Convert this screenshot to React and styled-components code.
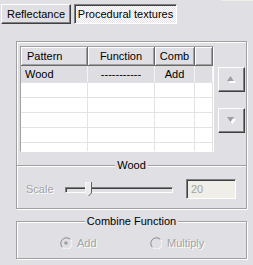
import React from "react";
import styled, { createGlobalStyle } from "styled-components";

const GlobalStyle = createGlobalStyle`
  html, body {
    margin: 0;
    padding: 0;
    background: #e0dfe3;
  }
  body {
    font-family: "Liberation Sans", Arial, sans-serif;
    font-size: 11px;
    color: #000;
  }
  * { box-sizing: border-box; }
`;

const Window = styled.div`
  width: 253px;
  height: 265px;
  display: flex;
  flex-direction: column;
  overflow: hidden;
  background: #e0dfe3;
`;

const TopStrip = styled.div`
  height: 4px;
  display: flex;
  justify-content: flex-end;
  span {
    width: 32px;
    height: 1px;
    background: #efeee8;
  }
`;

const TabRow = styled.div`
  display: flex;
  gap: 3px;
  padding-left: 1px;
  height: 20px;
`;

const TabButton = styled.div`
  height: 20px;
  width: ${(p) => p.$w}px;
  display: flex;
  align-items: center;
  justify-content: center;
  ${(p) =>
    p.$active
      ? `
    background: repeating-conic-gradient(#ffffff 0 25%, #e4e3e7 0 50%) 0 0 / 2px 2px;
    border-top: 1px solid #808080;
    border-left: 1px solid #808080;
    border-right: 1px solid #ffffff;
    border-bottom: 1px solid #ffffff;
    box-shadow: inset 1px 1px 0 #404040;
  `
      : `
    background: #e0dfe3;
    border-top: 1px solid #ffffff;
    border-left: 1px solid #ffffff;
    border-right: 1px solid #404040;
    border-bottom: 1px solid #404040;
    box-shadow: inset -1px -1px 0 #808080;
  `}
`;

const Box = styled.div`
  margin: 17px 0 0 16px;
  width: 231px;
  height: 168px;
  border: 1px solid #a0a0a0;
  box-shadow: inset 1px 1px 0 #fff, 1px 1px 0 #fff;
  display: flex;
  flex-direction: column;
`;

const ListRow = styled.div`
  display: flex;
  gap: 4px;
  padding: 4px 0 0 3px;
`;

const List = styled.div`
  width: 194px;
  height: 106px;
  background: #fff;
  border-top: 1px solid #a0a0a0;
  border-left: 1px solid #a0a0a0;
  border-right: 1px solid #fff;
  border-bottom: 1px solid #fff;
  overflow: hidden;
  display: flex;
  flex-direction: column;
`;

const HeaderRow = styled.div`
  display: flex;
  height: 19px;
  flex: none;
`;

const HeaderCell = styled.div`
  width: ${(p) => p.$w}px;
  flex: none;
  height: 19px;
  background: #e0dfe3;
  border-right: 1px solid #696969;
  border-bottom: 1px solid #696969;
  box-shadow: inset 1px 1px 0 #fff, inset -1px -1px 0 #a0a0a0;
  display: flex;
  align-items: center;
  justify-content: ${(p) => (p.$align === "left" ? "flex-start" : "center")};
  padding-left: ${(p) => (p.$align === "left" ? "6px" : "0")};
`;

const BodyRow = styled.div`
  display: flex;
  flex: none;
  height: ${(p) => p.$h}px;
  background: ${(p) => (p.$selected ? "#dedde2" : "#fff")};
  border-bottom: 1px solid #e3e3e3;
`;

const Cell = styled.div`
  width: ${(p) => p.$w}px;
  flex: none;
  display: flex;
  align-items: center;
  justify-content: ${(p) => (p.$align === "left" ? "flex-start" : "center")};
  padding-left: ${(p) => (p.$align === "left" ? "4px" : "0")};
  border-right: 1px solid ${(p) => (p.$selected ? "#f4f4f4" : "#e3e3e3")};
  white-space: nowrap;
  overflow: hidden;
`;

const SideButtons = styled.div`
  display: flex;
  flex-direction: column;
  gap: 16px;
  padding-top: 21px;
`;

const ArrowButton = styled.div`
  width: 27px;
  height: 25px;
  background: #e0dfe3;
  border-top: 1px solid #fff;
  border-left: 1px solid #fff;
  border-right: 1px solid #404040;
  border-bottom: 1px solid #404040;
  box-shadow: inset -1px -1px 0 #808080;
  display: flex;
  align-items: center;
  justify-content: center;
`;

const Group = styled.fieldset`
  margin: 0;
  padding: 0;
  min-width: 0;
  border: none;
  border-top: 1px solid #a0a0a0;
  box-shadow: inset 0 1px 0 #fff;
`;

const FramedGroup = styled(Group)`
  margin: 6px 0 0 16px;
  width: 231px;
  border: 1px solid #a0a0a0;
  box-shadow: inset 1px 1px 0 #fff, 1px 1px 0 #fff;
`;

const Legend = styled.legend`
  margin: 0 auto;
  padding: 0 2px;
  line-height: 13px;
  background: #e0dfe3;
`;

const SliderRow = styled.div`
  display: flex;
  align-items: center;
  gap: 13px;
  padding: 7px 0 8px 9px;
`;

const Disabled = styled.span`
  color: #a3a3a3;
  text-shadow: 1px 1px 0 #fff;
  width: ${(p) => (p.$w ? `${p.$w}px` : "auto")};
`;

const Slider = styled.div`
  position: relative;
  width: 108px;
  height: 20px;
  &::before {
    content: "";
    position: absolute;
    left: 0;
    right: 0;
    top: 8px;
    height: 4px;
    border-top: 1px solid #808080;
    border-left: 1px solid #808080;
    border-bottom: 1px solid #fff;
    border-right: 1px solid #fff;
    box-shadow: inset 1px 1px 0 #404040;
  }
`;

const Thumb = styled.svg`
  position: absolute;
  top: 3px;
`;

const ValueBox = styled.div`
  width: 50px;
  height: 20px;
  background: #efeee8;
  border-top: 1px solid #808080;
  border-left: 1px solid #808080;
  border-right: 1px solid #fff;
  border-bottom: 1px solid #fff;
  box-shadow: inset 1px 1px 0 #404040;
  display: flex;
  align-items: center;
  padding-left: 4px;
  color: #a3a3a3;
`;

const RadioRow = styled.div`
  display: grid;
  grid-template-columns: 90px 90px;
  padding: 8px 0 9px 43px;
`;

const RadioItem = styled.div`
  display: flex;
  align-items: center;
  gap: 5px;
  height: 13px;
`;

const columns = [
  { w: 67, title: "Pattern", align: "left" },
  { w: 67, title: "Function", align: "center" },
  { w: 40, title: "Comb", align: "center" },
  { w: 18, title: "", align: "center" },
];

const rows = [
  { cells: ["Wood", "-----------", "Add", ""], selected: true, h: 17 },
  { cells: ["", "", "", ""], h: 15 },
  { cells: ["", "", "", ""], h: 15 },
  { cells: ["", "", "", ""], h: 15 },
  { cells: ["", "", "", ""], h: 15 },
  { cells: ["", "", "", ""], h: 15 },
];

function Triangle({ up }) {
  return (
    <svg width="9" height="7" viewBox="0 0 9 7">
      <polygon
        points={up ? "1,6 8,6 4.5,1" : "1,1 8,1 4.5,6"}
        fill="#fff"
        transform="translate(1,1)"
      />
      <polygon points={up ? "0,5 7,5 3.5,0" : "0,0 7,0 3.5,5"} fill="#a0a0a0" />
    </svg>
  );
}

function Radio({ checked }) {
  return (
    <svg width="12" height="12" viewBox="0 0 12 12">
      <path d="M10.5 2.5 A5.5 5.5 0 1 0 2.5 10.5" fill="none" stroke="#808080" />
      <path d="M10.5 2.5 A5.5 5.5 0 0 1 2.5 10.5" fill="none" stroke="#fff" />
      <circle cx="6" cy="6" r="4.3" fill="#e0dfe3" />
      {checked && <circle cx="6" cy="6" r="1.8" fill="#a0a0a0" />}
    </svg>
  );
}

export default function App() {
  const scale = 20;
  const thumbLeft = Math.round((scale / 110) * 108);

  return (
    <Window>
      <GlobalStyle />
      <TopStrip>
        <span />
      </TopStrip>
      <TabRow>
        <TabButton $w={70}>Reflectance</TabButton>
        <TabButton $w={103} $active>
          Procedural textures
        </TabButton>
      </TabRow>

      <Box>
        <ListRow>
          <List>
            <HeaderRow>
              {columns.map((c, i) => (
                <HeaderCell key={i} $w={c.w} $align={c.align}>
                  {c.title}
                </HeaderCell>
              ))}
            </HeaderRow>
            {rows.map((r, i) => (
              <BodyRow key={i} $h={r.h} $selected={r.selected}>
                {r.cells.map((t, j) => (
                  <Cell
                    key={j}
                    $w={columns[j].w}
                    $align={columns[j].align}
                    $selected={r.selected}
                  >
                    {t}
                  </Cell>
                ))}
              </BodyRow>
            ))}
          </List>
          <SideButtons>
            <ArrowButton>
              <Triangle up />
            </ArrowButton>
            <ArrowButton>
              <Triangle />
            </ArrowButton>
          </SideButtons>
        </ListRow>

        <Group style={{ marginTop: 7 }}>
          <Legend>Wood</Legend>
          <SliderRow>
            <Disabled $w={26}>Scale</Disabled>
            <Slider>
              <Thumb
                width="7"
                height="14"
                viewBox="0 0 7 14"
                style={{ left: thumbLeft }}
              >
                <polygon points="0,0 6,0 6,11 3,14 0,11" fill="#ecebec" />
                <polyline points="0,11 0,0 6,0" fill="none" stroke="#fff" strokeWidth="1" />
                <polyline points="6.5,0 6.5,11 3,14.5" fill="none" stroke="#606060" strokeWidth="1" />
              </Thumb>
            </Slider>
            <ValueBox>{scale}</ValueBox>
          </SliderRow>
        </Group>
      </Box>

      <FramedGroup>
        <Legend>Combine Function</Legend>
        <RadioRow>
          <RadioItem>
            <Radio checked />
            <Disabled>Add</Disabled>
          </RadioItem>
          <RadioItem>
            <Radio />
            <Disabled>Multiply</Disabled>
          </RadioItem>
        </RadioRow>
      </FramedGroup>
    </Window>
  );
}
